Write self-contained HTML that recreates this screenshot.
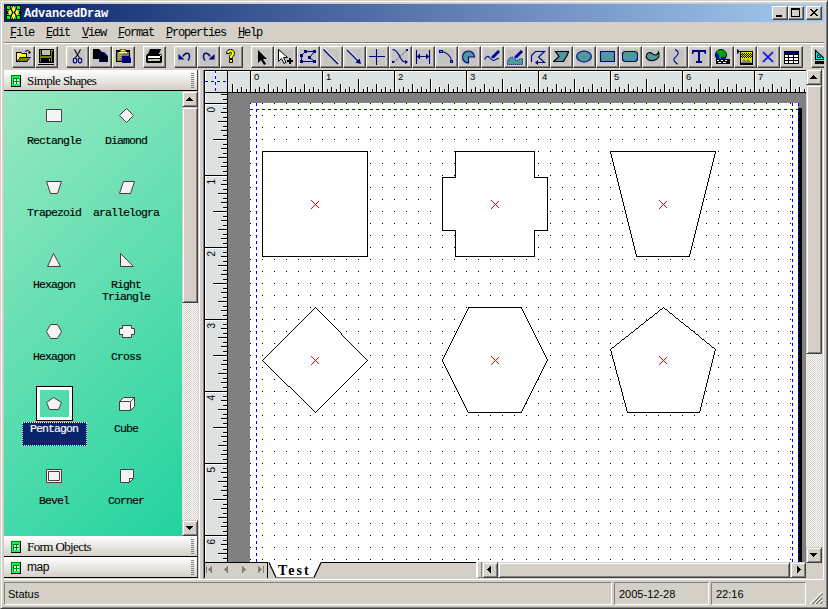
<!DOCTYPE html>
<html><head><meta charset="utf-8">
<style>
*{box-sizing:border-box;margin:0;padding:0}
html,body{width:828px;height:609px;overflow:hidden;background:#D4D0C8}
body{position:relative;font-family:"Liberation Sans",sans-serif}
.a{position:absolute}
.mono{font-family:"Liberation Mono",monospace}
.tb{position:absolute;top:46px;width:23px;height:22px;border-top:1px solid #fff;border-left:1px solid #fff;box-shadow:inset -1px -1px 0 #808080;border-right:1px solid #404040;border-bottom:1px solid #404040;background:#D4D0C8}
.tb svg{position:absolute;left:2px;top:2px;width:16px;height:16px;background:#C8C8C8}
.raised{border-top:1px solid #D4D0C8;border-left:1px solid #D4D0C8;border-right:1px solid #404040;border-bottom:1px solid #404040;box-shadow:inset 1px 1px 0 #fff,inset -1px -1px 0 #808080;background:#D4D0C8}
.menu span{position:absolute;top:27px;font-size:12px;letter-spacing:-1.2px;line-height:12px}
.menu u{text-decoration:none;position:relative}.menu u::after{content:"";position:absolute;left:0;width:6px;top:11px;height:1px;background:#000}
.check{background-color:#fff;background-image:linear-gradient(45deg,#D4D0C8 25%,transparent 25%,transparent 75%,#D4D0C8 75%),linear-gradient(45deg,#D4D0C8 25%,transparent 25%,transparent 75%,#D4D0C8 75%);background-size:2px 2px;background-position:0 0,1px 1px}
.hdr{position:absolute;left:4px;width:194px;height:21px;background:linear-gradient(#fff,#D4D0C8);border-bottom:1px solid #000;border-right:1px solid #404040}
.hdr .ic{position:absolute;left:7px;top:5px;width:10px;height:12px}
.hdr .t{position:absolute;left:23px;top:3px;font-family:"Liberation Serif",serif;font-size:13px;letter-spacing:-0.6px;color:#000;white-space:nowrap;line-height:15px}
.hdr .g{position:absolute;left:187px;top:3px;width:3px;height:15px;background:repeating-linear-gradient(#808080 0 1px,transparent 1px 2px)}
.lbl{position:absolute;font-family:"Liberation Mono",monospace;font-size:11.5px;letter-spacing:-0.9px;-webkit-text-stroke:0.15px currentColor;text-align:center;width:72px;color:#000;line-height:12px}
.st{position:absolute;top:582px;height:23px;border-top:1px solid #808080;border-left:1px solid #808080;border-right:1px solid #fff;border-bottom:1px solid #fff}
.stt{position:absolute;top:589px;font-size:11px;line-height:11px}
</style></head><body>
<!-- window frame -->
<div class="a" style="left:0;top:0;width:828px;height:609px;border-top:1px solid #D4D0C8;border-left:1px solid #D4D0C8;border-right:1px solid #404040;border-bottom:1px solid #404040;box-shadow:inset 1px 1px 0 #fff,inset -1px -1px 0 #808080"></div>
<!-- title bar -->
<div class="a" style="left:4px;top:4px;width:820px;height:18px;background:linear-gradient(to right,#0A246A,#A6CAF0)"></div>
<svg class="a" style="left:6px;top:5px" width="15" height="15" viewBox="0 0 15 15" shape-rendering="crispEdges"><rect width="15" height="15" fill="#000"/><path d="M1 1h3v3h-3zM11 1h3v3h-3zM1 11h3v3h-3zM11 11h3v3h-3zM5 1h1v2h-1zM9 1h1v2h-1zM1 5h2v1h-2zM1 9h2v1h-2zM12 5h2v1h-2zM12 9h2v1h-2zM5 12h1v2h-1zM9 12h1v2h-1z" fill="#00FF00"/><g shape-rendering="auto"><path d="M7.5 0.5L9.5 4L7.5 7.5L5.5 4z" fill="#FFFF00"/><path d="M8.0 1.5L9.5 4L8.0 6.5z" fill="#E0E0F0"/><path d="M4 4.0L6 7.5L4 11.0L2 7.5z" fill="#FFFF00"/><path d="M4.5 5.0L6 7.5L4.5 10.0z" fill="#E0E0F0"/><path d="M11 4.0L13 7.5L11 11.0L9 7.5z" fill="#FFFF00"/><path d="M11.5 5.0L13 7.5L11.5 10.0z" fill="#E0E0F0"/><path d="M7.5 7.5L9.5 11L7.5 14.5L5.5 11z" fill="#FFFF00"/><path d="M8.0 8.5L9.5 11L8.0 13.5z" fill="#E0E0F0"/></g></svg>
<div class="a mono" style="left:24px;top:5px;height:18px;line-height:18px;color:#fff;font-weight:bold;font-size:12px;letter-spacing:-0.2px">AdvancedDraw</div>
<!-- caption buttons -->
<div class="a raised" style="left:772px;top:6px;width:16px;height:14px;border-top-color:#fff;border-left-color:#fff;box-shadow:inset -1px -1px 0 #808080"><div class="a" style="left:3px;top:8px;width:6px;height:2px;background:#000"></div></div>
<div class="a raised" style="left:788px;top:6px;width:16px;height:14px;border-top-color:#fff;border-left-color:#fff;box-shadow:inset -1px -1px 0 #808080"><div class="a" style="left:2px;top:1px;width:9px;height:9px;border:1px solid #000;border-top-width:2px"></div></div>
<div class="a raised" style="left:806px;top:6px;width:16px;height:14px;border-top-color:#fff;border-left-color:#fff;box-shadow:inset -1px -1px 0 #808080"><svg class="a" style="left:3px;top:2px" width="8" height="7" viewBox="0 0 8 7" shape-rendering="crispEdges"><path d="M0 0h2v1h-2zM6 0h2v1h-2zM1 1h2v1h-2zM5 1h2v1h-2zM2 2h4v1h-4zM3 3h2v1h-2zM2 4h4v1h-4zM1 5h2v1h-2zM5 5h2v1h-2zM0 6h2v1h-2zM6 6h2v1h-2z" fill="#000"/></svg></div>
<!-- menu -->
<div class="menu mono">
<span style="left:10px"><u>F</u>ile</span>
<span style="left:46px"><u>E</u>dit</span>
<span style="left:82px"><u>V</u>iew</span>
<span style="left:118px"><u>F</u>ormat</span>
<span style="left:166px"><u>P</u>roperties</span>
<span style="left:238px"><u>H</u>elp</span>
</div>
<div class="a" style="left:4px;top:42px;width:820px;height:1px;background:#808080"></div>
<div class="a" style="left:4px;top:43px;width:820px;height:1px;background:#fff"></div>
<div class="a" style="left:0;top:0;width:824px;height:70px;overflow:hidden">
<div class="tb" style="left:12px"><svg viewBox="0 0 16 16" style="background:#C4C4C4"><path d="M1 3h5l1 1h5v4h4l-4 5h-11z" fill="#000"/><path d="M2 4h4l1 1h4v3h-6l-3 4z" fill="#FFFF00"/><path d="M3 5h1v1h-1zM5 5h1v1h-1zM2 7h1v1h-1zM4 7h1v1h-1zM3 9h1v1h-1zM7 6h1v1h-1zM9 6h1v1h-1z" fill="#fff"/><path d="M5.5 9h9.5l-3.5 3h-9z" fill="#808000"/><path d="M10 2.5q3-2.5 5 0.5" stroke="#000" fill="none"/><path d="M13 3h3l-1.5 2z" fill="#000"/></svg></div>
<div class="tb" style="left:35px"><svg viewBox="0 0 16 16" style="background:#D4D0C8"><path d="M1 0h15v14h-15z" fill="#000"/><path d="M2 1h1v12h-1zM13 1h1v12h-1zM2 7h12v2h-12z" fill="#808000"/><path d="M4 1h8v5h-8z" fill="#C0C0C0"/><path d="M11 10h1v2h-1z" fill="#C0C0C0"/><path d="M14 1h1v1h-1z" fill="#C0C0C0"/><path d="M0 15h16v1h-16z" fill="#000"/></svg></div>
<div class="tb" style="left:66px"><svg viewBox="0 0 16 16" style="background:#C4C4C4"><path d="M5.5 0.5L8.5 6L10.5 8.5M11.5 0.5L8.5 6L6.5 8.5" stroke="#000" fill="none" stroke-width="1.1"/><ellipse cx="6" cy="11.5" rx="1.8" ry="2.4" stroke="#000080" fill="none" stroke-width="1.1"/><ellipse cx="11" cy="11.5" rx="1.8" ry="2.4" stroke="#000080" fill="none" stroke-width="1.1"/></svg></div>
<div class="tb" style="left:89px"><svg viewBox="0 0 16 16" style="background:#C4C4C4"><path d="M1 0h6l3 3v7h-9z" fill="#000"/><path d="M7 3h5l4 4v6h-9z" fill="#000080"/><path d="M8 4h4v3h3v5h-7z" fill="#000"/></svg></div>
<div class="tb" style="left:112px"><svg viewBox="0 0 16 16" style="background:#C4C4C4"><path d="M1 1h14v12h-14z" fill="#000"/><path d="M2 3h12v9h-12z" fill="#808040"/><path d="M3 4h1v1h-1zM5 4h1v1h-1zM7 4h1v1h-1zM4 5h1v1h-1zM6 5h1v1h-1zM3 6h1v1h-1zM5 6h1v1h-1zM4 7h1v1h-1zM3 8h1v1h-1zM5 8h1v1h-1zM4 9h1v1h-1zM3 10h1v1h-1z" fill="#C0C080"/><path d="M5 1l2-1h2l2 1v2h-6z" fill="#FFFF00" stroke="#000" stroke-width="0.8"/><path d="M4 3h8v1h-8z" fill="#fff"/><path d="M7 7h7l2 2v5h-9z" fill="#000080"/><path d="M8 8h5v2h2v3h-7z" fill="#000080"/><path d="M9 10h3v1h-3zM9 12h5v1h-5z" fill="#000"/></svg></div>
<div class="tb" style="left:143px"><svg viewBox="0 0 16 16" style="background:#C4C4C4"><path d="M4 0h11l-2 5h-11z" fill="#000"/><path d="M1 5h14l1 2v6l-1 1h-14l-1-1v-6z" fill="#000"/><path d="M2 7h12v2h-12z" fill="#fff"/><path d="M2 10h12v2h-12z" fill="#C0C0C0"/><path d="M8 10h3v1h-3z" fill="#FFFF00"/><path d="M13 4h1v1h-1zM14 6h1v1h-1z" fill="#fff"/></svg></div>
<div class="tb" style="left:174px"><svg viewBox="0 0 16 16" style="background:#C4C4C4"><path d="M6 7.5C8 3 13 3 12.5 8C12.3 9.5 11.8 10.5 11 11.5" stroke="#000080" stroke-width="1.5" fill="none"/><path d="M1.5 5L7.5 10.5H1.5z" fill="#000080"/></svg></div>
<div class="tb" style="left:197px"><svg viewBox="0 0 16 16" style="background:#C4C4C4"><path d="M10 7.5C8 3 3 3 3.5 8C3.7 9.5 4.2 10.5 5 11.5" stroke="#000080" stroke-width="1.5" fill="none"/><path d="M14.5 5L8.5 10.5H14.5z" fill="#000080"/></svg></div>
<div class="tb" style="left:220px"><svg viewBox="0 0 16 16" style="background:#C4C4C4"><path d="M3.5 4.5C3.5 1.5 5.5 0.5 7.5 0.5S11.5 1.5 11.5 4.5C11.5 6.5 9.5 7.5 9.5 8.5V9.5H6.5V7.5C6.5 6 8.5 5.5 8.5 4.5S8 3 7.5 3S6.5 3.5 6.5 4.5z" fill="#FFFF00" stroke="#000"/><path d="M6.5 10.5h3v3h-3z" fill="#FFFF00" stroke="#000"/></svg></div>
<div class="tb" style="left:251px"><svg viewBox="0 0 16 16" style="background:#C4C4C4"><path d="M4 1v13l3-3 3 5 2-1-3-5h4z" fill="#000"/></svg></div>
<div class="tb" style="left:274px"><svg viewBox="0 0 16 16" style="background:#C4C4C4"><path d="M1.5 0.5V12.5L4.5 9.5L7 14.5L9 13.5L6.5 8.5H10.5z" fill="#fff" stroke="#000"/><path d="M12 9h2v2h2v2h-2v2h-2v-2h-2v-2h2z" fill="#000"/></svg></div>
<div class="tb" style="left:297px"><svg viewBox="0 0 16 16" style="background:#C4C4C4"><path d="M5.5 2.5H14.5L9.5 8.5L14.5 12.5H1.5V6.5Z" stroke="#000080" fill="none" stroke-width="1"/><path d="M4 1h3v3h-3zM13 1h3v3h-3zM0 5h3v3h-3zM8 7h3v3h-3zM0 11h3v3h-3zM13 11h3v3h-3z" fill="#000080"/></svg></div>
<div class="tb" style="left:320px"><svg viewBox="0 0 16 16" style="background:#C4C4C4"><path d="M0.5 0.5L15 15" stroke="#000080" stroke-width="1.2"/><path d="M1.5 -0.5L16 14" stroke="#fff" stroke-width="0.7"/></svg></div>
<div class="tb" style="left:343px"><svg viewBox="0 0 16 16" style="background:#C4C4C4"><path d="M1 1L12.5 12.5" stroke="#000080" stroke-width="1.1"/><path d="M2 0L13.5 11.5" stroke="#fff" stroke-width="0.6"/><path d="M15 15L13.5 9.5L9.5 13.5z" fill="#000080"/></svg></div>
<div class="tb" style="left:366px"><svg viewBox="0 0 16 16" style="background:#C4C4C4"><path d="M0 7.5h16M7.5 0v16" stroke="#000080" stroke-width="1.1"/></svg></div>
<div class="tb" style="left:389px"><svg viewBox="0 0 16 16" style="background:#C4C4C4"><path d="M0.5 0.5C4 0.5 6 4 8 8S11 13 15 13" stroke="#000080" fill="none" stroke-width="1.1"/><path d="M2 13L14 2" stroke="#000080" stroke-dasharray="1 1.6"/><path d="M0 12h2v2h-2zM14 0h2v2h-2z" fill="#000080"/><path d="M13 11l3 2-3 2z" fill="#000080"/></svg></div>
<div class="tb" style="left:412px"><svg viewBox="0 0 16 16" style="background:#C4C4C4"><path d="M1.5 1v14M14.5 1v14M2 7.5h12" stroke="#000080" stroke-width="1.1"/><path d="M2 7.5l3-3v6zM14 7.5l-3-3v6z" fill="#000080"/></svg></div>
<div class="tb" style="left:435px"><svg viewBox="0 0 16 16" style="background:#C4C4C4"><path d="M3 2.5C8 2.5 13 7 13.5 12" stroke="#000080" fill="none" stroke-width="1.1"/><path d="M1 1h4v3h-4zM12 11h3v3h-3z" fill="#000080"/><path d="M2 2h2v1h-2zM13 12h1v1h-1z" fill="#00FF00"/></svg></div>
<div class="tb" style="left:458px"><svg viewBox="0 0 16 16" style="background:#C4C4C4"><path d="M7.5 8H13.5A6 6 0 1 0 7.5 14Z" fill="#4E9A9A" stroke="#000080" stroke-width="1.1"/></svg></div>
<div class="tb" style="left:481px"><svg viewBox="0 0 16 16" style="background:#C4C4C4"><path d="M0.5 10.5C2 8 3.5 6 5.5 8.5S8.5 12 10 11.5S13 9 15 9.5" stroke="#000080" fill="none" stroke-width="1.1"/><path d="M8 7l6-6 2 2-6 6z" fill="#000080"/><path d="M7 8l1.5-1.5 2 2-2 1z" fill="#0000FF"/></svg></div>
<div class="tb" style="left:504px"><svg viewBox="0 0 16 16" style="background:#C4C4C4"><path d="M0.5 15.5V12C2 9 4 7 6 8.5S9 12 11 11S14 9 15.5 10V15.5z" fill="#4E9A9A" stroke="#000080" stroke-width="1" stroke-dasharray="1 1"/><path d="M8 7l6-6 2 2-6 6z" fill="#000080"/><path d="M7 8l1.5-1.5 2 2-2 1z" fill="#0000FF"/></svg></div>
<div class="tb" style="left:527px"><svg viewBox="0 0 16 16" style="background:#C4C4C4"><path d="M1.5 13V6.5L5.5 2.5H14.5L8.5 8L14.5 13.5H6" stroke="#000080" fill="none" stroke-width="1.1"/><path d="M5 13.5l3-2.5v5z" fill="#000080"/></svg></div>
<div class="tb" style="left:550px"><svg viewBox="0 0 16 16" style="background:#C4C4C4"><path d="M2.5 2.5H15.5L14.5 5.5L10.5 12.5H0.5L6 7.5z" fill="#4E9A9A" stroke="#000" stroke-width="1.2"/></svg></div>
<div class="tb" style="left:573px"><svg viewBox="0 0 16 16" style="background:#C4C4C4"><ellipse cx="8" cy="7.5" rx="7.3" ry="5.5" fill="#4E9A9A" stroke="#000080" stroke-width="1.1"/></svg></div>
<div class="tb" style="left:596px"><svg viewBox="0 0 16 16" style="background:#C4C4C4"><path d="M1.5 2.5h14v10h-14z" fill="#4E9A9A" stroke="#000080" stroke-width="1.1"/></svg></div>
<div class="tb" style="left:619px"><svg viewBox="0 0 16 16" style="background:#C4C4C4"><rect x="0.5" y="2.5" width="15" height="10" rx="3" fill="#4E9A9A" stroke="#000080" stroke-width="1.1"/></svg></div>
<div class="tb" style="left:642px"><svg viewBox="0 0 16 16" style="background:#C4C4C4"><path d="M1.5 6.5C2 3.5 5 3 7 4.5S10 7 12 5.5L13.5 3C14.5 6 14 9 11 10.5S5 12 3 10.5S1 8 1.5 6.5z" fill="#4E9A9A" stroke="#000" stroke-width="1.1"/></svg></div>
<div class="tb" style="left:665px"><svg viewBox="0 0 16 16" style="background:#C4C4C4"><path d="M7 0.5C10 2 11.5 3.5 9 6.5S5 9.5 6 11.5S9 14 9.5 15.5" stroke="#000080" fill="none" stroke-width="1.1"/></svg></div>
<div class="tb" style="left:688px"><svg viewBox="0 0 16 16" style="background:#C4C4C4"><path d="M1 1h14v4h-1l-1-2h-4v9h2v2h-6v-2h2v-9h-4l-1 2h-1z" fill="#000080"/></svg></div>
<div class="tb" style="left:711px"><svg viewBox="0 0 16 16" style="background:#C4C4C4"><circle cx="7" cy="6" r="5.5" fill="#0000FF" stroke="#000"/><path d="M4 1.5C7 0 11 1 12 4S11 9 9 8S8 10 6 10S6 6 4 5S2 3 4 1.5z" fill="#00A000"/><path d="M2 10h14v5h-14z" fill="#000"/><path d="M3 11h2v1h-2zM7 11h2v1h-2zM11 11h2v1h-2zM4 13h3v1h-3zM9 13h3v1h-3z" fill="#fff"/></svg></div>
<div class="tb" style="left:734px"><svg viewBox="0 0 16 16" style="background:#C4C4C4"><path d="M0 0l3 2.5-3 2.5z" fill="#000"/><path d="M3 2h13v14h-13z" fill="#000"/><path d="M4 3h11v11h-11z" fill="#E0E000"/><path d="M5 4h1v1h-1zM7 4h1v1h-1zM9 4h1v1h-1zM11 4h1v1h-1zM13 4h1v1h-1zM4 5h1v1h-1zM6 5h1v1h-1zM8 5h1v1h-1zM10 5h1v1h-1zM12 5h1v1h-1zM14 5h1v1h-1zM5 6h1v1h-1zM7 6h1v1h-1zM9 6h1v1h-1zM11 6h1v1h-1zM13 6h1v1h-1zM4 7h1v1h-1zM6 7h1v1h-1zM8 7h1v1h-1zM10 7h1v1h-1zM12 7h1v1h-1zM14 7h1v1h-1zM5 8h1v1h-1zM7 8h1v1h-1zM9 8h1v1h-1zM11 8h1v1h-1zM13 8h1v1h-1z" fill="#000"/><path d="M4 14l3-4 2 2 2-2 4 4z" fill="#808080"/></svg></div>
<div class="tb" style="left:757px"><svg viewBox="0 0 16 16" style="background:#C4C4C4"><path d="M3 3l10 10M13 3l-10 10" stroke="#0000FF" stroke-width="1.6"/></svg></div>
<div class="tb" style="left:780px"><svg viewBox="0 0 16 16" style="background:#C4C4C4"><path d="M1 2h15v13h-15z" fill="#000"/><path d="M2 3h13v2h-13z" fill="#000080"/><path d="M2 6h3v2h-3zM6 6h4v2h-4zM11 6h4v2h-4zM2 9h3v2h-3zM6 9h4v2h-4zM11 9h4v2h-4zM2 12h3v2h-3zM6 12h4v2h-4zM11 12h4v2h-4z" fill="#fff"/></svg></div>
<div class="tb" style="left:811px"><svg viewBox="0 0 16 16" style="background:#C4C4C4"><path d="M1.5 1.5V10.5H11.5z" fill="#00FFFF" stroke="#000" stroke-width="1.1"/><path d="M3.5 5.5V8.5H7z" fill="#C8C8C8" stroke="#000" stroke-width="0.8"/><path d="M10 3h1v8h-1z" fill="#000"/><path d="M1 12h15v3h-15z" fill="#000"/></svg></div>
</div>
<!-- LEFT PANEL -->
<div class="hdr" style="top:70px"><svg class="ic" viewBox="0 0 10 12" shape-rendering="crispEdges"><rect width="10" height="12" fill="#000"/><rect width="9" height="11" fill="#008000"/><rect x="1" y="1" width="8" height="10" fill="#00FF00"/><path d="M2 1h1v1h-1zM4 1h1v1h-1zM6 1h1v1h-1zM8 1h1v1h-1zM1 2h1v1h-1zM1 4h1v1h-1zM1 6h1v1h-1zM1 8h1v1h-1zM1 10h1v1h-1zM8 3h1v1h-1zM8 5h1v1h-1zM8 7h1v1h-1zM8 9h1v1h-1zM3 10h1v1h-1zM5 10h1v1h-1zM7 10h1v1h-1z" fill="#00FFFF"/><rect x="2" y="3" width="6" height="6" fill="#008000"/><path d="M3 4h2v2h-2zM6 4h2v2h-2zM3 7h2v2h-2zM6 7h2v2h-2z" fill="#fff"/></svg><div class="t">Simple Shapes</div><div class="g"></div></div>
<div class="a" style="left:4px;top:91px;width:178px;height:445px;background:linear-gradient(135deg,#98E8C0,#22D3A0)"></div>
<svg class="a" style="left:0;top:0" width="200" height="540" viewBox="0 0 200 540">
<path shape-rendering="crispEdges" d="M36 386h37v35h-37zM40 390v27h29v-27z" fill="#000" fill-rule="evenodd"/>
<path shape-rendering="crispEdges" d="M37 387h35v33h-35zM40 390v27h29v-27z" fill="#fff" fill-rule="evenodd"/>
<path d="M46.5 109.5 L61.5 109.5 L61.5 121.5 L46.5 121.5Z" fill="#F4F4F4" stroke="#4A3C3C"/><path d="M47.5 110.5 L60.5 110.5 L60.5 120.5 L47.5 120.5Z" fill="none" stroke="#fff"/>
<path d="M126.5 108.5 L133.5 115.5 L126.5 122.5 L119.5 115.5Z" fill="#F4F4F4" stroke="#4A3C3C"/>
<path d="M46.5 181.5 L61.5 181.5 L57.5 193.5 L50.5 193.5Z" fill="#F4F4F4" stroke="#4A3C3C"/>
<path d="M123.5 181.5 L134.5 181.5 L130.5 193.5 L119.5 193.5Z" fill="#F4F4F4" stroke="#4A3C3C"/>
<path d="M53.5 253.5 L60.5 266.5 L47.5 266.5Z" fill="#F4F4F4" stroke="#4A3C3C"/>
<path d="M120.5 253.5 L133.5 266.5 L120.5 266.5Z" fill="#F4F4F4" stroke="#4A3C3C"/>
<path d="M50.5 324.5 L57.5 324.5 L61.5 331.5 L57.5 338.5 L50.5 338.5 L46.5 331.5Z" fill="#F4F4F4" stroke="#4A3C3C"/>
<path d="M122.5 325.5 L131.5 325.5 L131.5 328.5 L134.5 328.5 L134.5 334.5 L131.5 334.5 L131.5 337.5 L122.5 337.5 L122.5 334.5 L119.5 334.5 L119.5 328.5 L122.5 328.5Z" fill="#F4F4F4" stroke="#4A3C3C"/>
<path d="M53.5 397.5 L61.5 402.5 L58.5 409.5 L49.5 409.5 L46.5 402.5Z" fill="#F4F4F4" stroke="#4A3C3C"/>
<path d="M123.5 397.5 L134.5 397.5 L134.5 406.5 L130.5 410.5 L119.5 410.5 L119.5 401.5Z" fill="#F4F4F4" stroke="#4A3C3C"/><path d="M119.5 401.5H130.5V410.5M130.5 401.5L134.5 397.5" fill="none" stroke="#4A3C3C"/>
<path d="M46.5 469.5 L61.5 469.5 L61.5 482.5 L46.5 482.5Z" fill="#F4F4F4" stroke="#4A3C3C"/><path d="M48.5 471.5 L59.5 471.5 L59.5 480.5 L48.5 480.5Z" fill="none" stroke="#4A3C3C"/>
<path d="M120.5 469.5 L133.5 469.5 L133.5 478.5 L129.5 482.5 L120.5 482.5Z" fill="#F4F4F4" stroke="#4A3C3C"/><path d="M129.5 482V478.5H133" fill="none" stroke="#4A3C3C"/>
</svg>
<div class="a" style="left:22px;top:422px;width:65px;height:24px;background:#0A246A;outline:1px dotted #fff;outline-offset:-1px;border:1px dotted #000"></div>
<div class="lbl" style="left:18px;top:135px;color:#000">Rectangle</div>
<div class="lbl" style="left:90px;top:135px;color:#000">Diamond</div>
<div class="lbl" style="left:18px;top:207px;color:#000">Trapezoid</div>
<div class="lbl" style="left:90px;top:207px;color:#000">arallelogra</div>
<div class="lbl" style="left:18px;top:279px;color:#000">Hexagon</div>
<div class="lbl" style="left:90px;top:279px;color:#000">Right<br>Triangle</div>
<div class="lbl" style="left:18px;top:351px;color:#000">Hexagon</div>
<div class="lbl" style="left:90px;top:351px;color:#000">Cross</div>
<div class="lbl" style="left:18px;top:423px;color:#fff">Pentagon</div>
<div class="lbl" style="left:90px;top:423px;color:#000">Cube</div>
<div class="lbl" style="left:18px;top:495px;color:#000">Bevel</div>
<div class="lbl" style="left:90px;top:495px;color:#000">Corner</div>
<div class="hdr" style="top:536px"><svg class="ic" viewBox="0 0 10 12" shape-rendering="crispEdges"><rect width="10" height="12" fill="#000"/><rect width="9" height="11" fill="#008000"/><rect x="1" y="1" width="8" height="10" fill="#00FF00"/><path d="M2 1h1v1h-1zM4 1h1v1h-1zM6 1h1v1h-1zM8 1h1v1h-1zM1 2h1v1h-1zM1 4h1v1h-1zM1 6h1v1h-1zM1 8h1v1h-1zM1 10h1v1h-1zM8 3h1v1h-1zM8 5h1v1h-1zM8 7h1v1h-1zM8 9h1v1h-1zM3 10h1v1h-1zM5 10h1v1h-1zM7 10h1v1h-1z" fill="#00FFFF"/><rect x="2" y="3" width="6" height="6" fill="#008000"/><path d="M3 4h2v2h-2zM6 4h2v2h-2zM3 7h2v2h-2zM6 7h2v2h-2z" fill="#fff"/></svg><div class="t">Form Objects</div><div class="g"></div></div>
<div class="hdr" style="top:557px"><svg class="ic" viewBox="0 0 10 12" shape-rendering="crispEdges"><rect width="10" height="12" fill="#000"/><rect width="9" height="11" fill="#008000"/><rect x="1" y="1" width="8" height="10" fill="#00FF00"/><path d="M2 1h1v1h-1zM4 1h1v1h-1zM6 1h1v1h-1zM8 1h1v1h-1zM1 2h1v1h-1zM1 4h1v1h-1zM1 6h1v1h-1zM1 8h1v1h-1zM1 10h1v1h-1zM8 3h1v1h-1zM8 5h1v1h-1zM8 7h1v1h-1zM8 9h1v1h-1zM3 10h1v1h-1zM5 10h1v1h-1zM7 10h1v1h-1z" fill="#00FFFF"/><rect x="2" y="3" width="6" height="6" fill="#008000"/><path d="M3 4h2v2h-2zM6 4h2v2h-2zM3 7h2v2h-2zM6 7h2v2h-2z" fill="#fff"/></svg><div class="t" style="font-family:'Liberation Sans',sans-serif;font-size:12px;letter-spacing:-0.5px;top:3px">map</div><div class="g"></div></div>
<!-- splitter -->
<div class="a" style="left:199px;top:70px;width:1px;height:510px;background:#fff"></div>
<div class="a" style="left:203px;top:70px;width:1px;height:509px;background:#808080"></div>
<div class="a" style="left:204px;top:70px;width:1px;height:508px;background:#000"></div>
<div class="a" style="left:204px;top:70px;width:602px;height:1px;background:#000"></div>
<div class="a" style="left:823px;top:69px;width:1px;height:511px;background:#fff"></div>
<div class="a" style="left:4px;top:579px;width:820px;height:1px;background:#fff"></div>
<svg class="a" style="left:205px;top:71px" width="601" height="491" viewBox="205 71 601 491" shape-rendering="crispEdges">
<rect x="205" y="71" width="601" height="491" fill="#808080"/>
<rect x="205" y="71" width="601" height="22" fill="#DCE2E2"/>
<rect x="205" y="71" width="23" height="491" fill="#DCE2E2"/>
<path d="M205 71h601v1h-601zM205 71h1v491h-1z" fill="#fff"/>
<path d="M233 84h1v8h-1zM238 89h1v3h-1zM242 87h1v5h-1zM247 89h1v3h-1zM251 71h1v21h-1zM256 89h1v3h-1zM260 87h1v5h-1zM265 89h1v3h-1zM269 84h1v8h-1zM274 89h1v3h-1zM278 87h1v5h-1zM283 89h1v3h-1zM287 79h1v13h-1zM292 89h1v3h-1zM296 87h1v5h-1zM301 89h1v3h-1zM305 84h1v8h-1zM310 89h1v3h-1zM314 87h1v5h-1zM319 89h1v3h-1zM323 71h1v21h-1zM328 89h1v3h-1zM332 87h1v5h-1zM337 89h1v3h-1zM341 84h1v8h-1zM346 89h1v3h-1zM350 87h1v5h-1zM355 89h1v3h-1zM359 79h1v13h-1zM364 89h1v3h-1zM368 87h1v5h-1zM373 89h1v3h-1zM377 84h1v8h-1zM382 89h1v3h-1zM386 87h1v5h-1zM391 89h1v3h-1zM395 71h1v21h-1zM400 89h1v3h-1zM404 87h1v5h-1zM409 89h1v3h-1zM413 84h1v8h-1zM418 89h1v3h-1zM422 87h1v5h-1zM427 89h1v3h-1zM431 79h1v13h-1zM436 89h1v3h-1zM440 87h1v5h-1zM445 89h1v3h-1zM449 84h1v8h-1zM454 89h1v3h-1zM458 87h1v5h-1zM463 89h1v3h-1zM467 71h1v21h-1zM472 89h1v3h-1zM476 87h1v5h-1zM481 89h1v3h-1zM485 84h1v8h-1zM490 89h1v3h-1zM494 87h1v5h-1zM499 89h1v3h-1zM503 79h1v13h-1zM508 89h1v3h-1zM512 87h1v5h-1zM517 89h1v3h-1zM521 84h1v8h-1zM526 89h1v3h-1zM530 87h1v5h-1zM535 89h1v3h-1zM539 71h1v21h-1zM544 89h1v3h-1zM548 87h1v5h-1zM553 89h1v3h-1zM557 84h1v8h-1zM562 89h1v3h-1zM566 87h1v5h-1zM571 89h1v3h-1zM575 79h1v13h-1zM580 89h1v3h-1zM584 87h1v5h-1zM589 89h1v3h-1zM593 84h1v8h-1zM598 89h1v3h-1zM602 87h1v5h-1zM607 89h1v3h-1zM611 71h1v21h-1zM616 89h1v3h-1zM620 87h1v5h-1zM625 89h1v3h-1zM629 84h1v8h-1zM634 89h1v3h-1zM638 87h1v5h-1zM643 89h1v3h-1zM647 79h1v13h-1zM652 89h1v3h-1zM656 87h1v5h-1zM661 89h1v3h-1zM665 84h1v8h-1zM670 89h1v3h-1zM674 87h1v5h-1zM679 89h1v3h-1zM683 71h1v21h-1zM688 89h1v3h-1zM692 87h1v5h-1zM697 89h1v3h-1zM701 84h1v8h-1zM706 89h1v3h-1zM710 87h1v5h-1zM715 89h1v3h-1zM719 79h1v13h-1zM724 89h1v3h-1zM728 87h1v5h-1zM733 89h1v3h-1zM737 84h1v8h-1zM742 89h1v3h-1zM746 87h1v5h-1zM751 89h1v3h-1zM755 71h1v21h-1zM760 89h1v3h-1zM764 87h1v5h-1zM769 89h1v3h-1zM773 84h1v8h-1zM778 89h1v3h-1zM782 87h1v5h-1zM787 89h1v3h-1zM791 79h1v13h-1zM796 89h1v3h-1zM800 87h1v5h-1zM805 89h1v3h-1zM221 95h6v1h-6zM223 100h4v1h-4zM205 104h22v1h-22zM223 109h4v1h-4zM221 113h6v1h-6zM223 118h4v1h-4zM218 122h9v1h-9zM223 127h4v1h-4zM221 131h6v1h-6zM223 136h4v1h-4zM213 140h14v1h-14zM223 145h4v1h-4zM221 149h6v1h-6zM223 154h4v1h-4zM218 158h9v1h-9zM223 163h4v1h-4zM221 167h6v1h-6zM223 172h4v1h-4zM205 176h22v1h-22zM223 181h4v1h-4zM221 185h6v1h-6zM223 190h4v1h-4zM218 194h9v1h-9zM223 199h4v1h-4zM221 203h6v1h-6zM223 208h4v1h-4zM213 212h14v1h-14zM223 217h4v1h-4zM221 221h6v1h-6zM223 226h4v1h-4zM218 230h9v1h-9zM223 235h4v1h-4zM221 239h6v1h-6zM223 244h4v1h-4zM205 248h22v1h-22zM223 253h4v1h-4zM221 257h6v1h-6zM223 262h4v1h-4zM218 266h9v1h-9zM223 271h4v1h-4zM221 275h6v1h-6zM223 280h4v1h-4zM213 284h14v1h-14zM223 289h4v1h-4zM221 293h6v1h-6zM223 298h4v1h-4zM218 302h9v1h-9zM223 307h4v1h-4zM221 311h6v1h-6zM223 316h4v1h-4zM205 320h22v1h-22zM223 325h4v1h-4zM221 329h6v1h-6zM223 334h4v1h-4zM218 338h9v1h-9zM223 343h4v1h-4zM221 347h6v1h-6zM223 352h4v1h-4zM213 356h14v1h-14zM223 361h4v1h-4zM221 365h6v1h-6zM223 370h4v1h-4zM218 374h9v1h-9zM223 379h4v1h-4zM221 383h6v1h-6zM223 388h4v1h-4zM205 392h22v1h-22zM223 397h4v1h-4zM221 401h6v1h-6zM223 406h4v1h-4zM218 410h9v1h-9zM223 415h4v1h-4zM221 419h6v1h-6zM223 424h4v1h-4zM213 428h14v1h-14zM223 433h4v1h-4zM221 437h6v1h-6zM223 442h4v1h-4zM218 446h9v1h-9zM223 451h4v1h-4zM221 455h6v1h-6zM223 460h4v1h-4zM205 464h22v1h-22zM223 469h4v1h-4zM221 473h6v1h-6zM223 478h4v1h-4zM218 482h9v1h-9zM223 487h4v1h-4zM221 491h6v1h-6zM223 496h4v1h-4zM213 500h14v1h-14zM223 505h4v1h-4zM221 509h6v1h-6zM223 514h4v1h-4zM218 518h9v1h-9zM223 523h4v1h-4zM221 527h6v1h-6zM223 532h4v1h-4zM205 536h22v1h-22zM223 541h4v1h-4zM221 545h6v1h-6zM223 550h4v1h-4zM218 554h9v1h-9zM223 559h4v1h-4z" fill="#fff"/>
<path d="M205 92h601v1h-601zM227 71h1v491h-1zM232 84h1v8h-1zM237 89h1v3h-1zM241 87h1v5h-1zM246 89h1v3h-1zM250 71h1v21h-1zM255 89h1v3h-1zM259 87h1v5h-1zM264 89h1v3h-1zM268 84h1v8h-1zM273 89h1v3h-1zM277 87h1v5h-1zM282 89h1v3h-1zM286 79h1v13h-1zM291 89h1v3h-1zM295 87h1v5h-1zM300 89h1v3h-1zM304 84h1v8h-1zM309 89h1v3h-1zM313 87h1v5h-1zM318 89h1v3h-1zM322 71h1v21h-1zM327 89h1v3h-1zM331 87h1v5h-1zM336 89h1v3h-1zM340 84h1v8h-1zM345 89h1v3h-1zM349 87h1v5h-1zM354 89h1v3h-1zM358 79h1v13h-1zM363 89h1v3h-1zM367 87h1v5h-1zM372 89h1v3h-1zM376 84h1v8h-1zM381 89h1v3h-1zM385 87h1v5h-1zM390 89h1v3h-1zM394 71h1v21h-1zM399 89h1v3h-1zM403 87h1v5h-1zM408 89h1v3h-1zM412 84h1v8h-1zM417 89h1v3h-1zM421 87h1v5h-1zM426 89h1v3h-1zM430 79h1v13h-1zM435 89h1v3h-1zM439 87h1v5h-1zM444 89h1v3h-1zM448 84h1v8h-1zM453 89h1v3h-1zM457 87h1v5h-1zM462 89h1v3h-1zM466 71h1v21h-1zM471 89h1v3h-1zM475 87h1v5h-1zM480 89h1v3h-1zM484 84h1v8h-1zM489 89h1v3h-1zM493 87h1v5h-1zM498 89h1v3h-1zM502 79h1v13h-1zM507 89h1v3h-1zM511 87h1v5h-1zM516 89h1v3h-1zM520 84h1v8h-1zM525 89h1v3h-1zM529 87h1v5h-1zM534 89h1v3h-1zM538 71h1v21h-1zM543 89h1v3h-1zM547 87h1v5h-1zM552 89h1v3h-1zM556 84h1v8h-1zM561 89h1v3h-1zM565 87h1v5h-1zM570 89h1v3h-1zM574 79h1v13h-1zM579 89h1v3h-1zM583 87h1v5h-1zM588 89h1v3h-1zM592 84h1v8h-1zM597 89h1v3h-1zM601 87h1v5h-1zM606 89h1v3h-1zM610 71h1v21h-1zM615 89h1v3h-1zM619 87h1v5h-1zM624 89h1v3h-1zM628 84h1v8h-1zM633 89h1v3h-1zM637 87h1v5h-1zM642 89h1v3h-1zM646 79h1v13h-1zM651 89h1v3h-1zM655 87h1v5h-1zM660 89h1v3h-1zM664 84h1v8h-1zM669 89h1v3h-1zM673 87h1v5h-1zM678 89h1v3h-1zM682 71h1v21h-1zM687 89h1v3h-1zM691 87h1v5h-1zM696 89h1v3h-1zM700 84h1v8h-1zM705 89h1v3h-1zM709 87h1v5h-1zM714 89h1v3h-1zM718 79h1v13h-1zM723 89h1v3h-1zM727 87h1v5h-1zM732 89h1v3h-1zM736 84h1v8h-1zM741 89h1v3h-1zM745 87h1v5h-1zM750 89h1v3h-1zM754 71h1v21h-1zM759 89h1v3h-1zM763 87h1v5h-1zM768 89h1v3h-1zM772 84h1v8h-1zM777 89h1v3h-1zM781 87h1v5h-1zM786 89h1v3h-1zM790 79h1v13h-1zM795 89h1v3h-1zM799 87h1v5h-1zM804 89h1v3h-1zM221 94h6v1h-6zM223 99h4v1h-4zM205 103h22v1h-22zM223 108h4v1h-4zM221 112h6v1h-6zM223 117h4v1h-4zM218 121h9v1h-9zM223 126h4v1h-4zM221 130h6v1h-6zM223 135h4v1h-4zM213 139h14v1h-14zM223 144h4v1h-4zM221 148h6v1h-6zM223 153h4v1h-4zM218 157h9v1h-9zM223 162h4v1h-4zM221 166h6v1h-6zM223 171h4v1h-4zM205 175h22v1h-22zM223 180h4v1h-4zM221 184h6v1h-6zM223 189h4v1h-4zM218 193h9v1h-9zM223 198h4v1h-4zM221 202h6v1h-6zM223 207h4v1h-4zM213 211h14v1h-14zM223 216h4v1h-4zM221 220h6v1h-6zM223 225h4v1h-4zM218 229h9v1h-9zM223 234h4v1h-4zM221 238h6v1h-6zM223 243h4v1h-4zM205 247h22v1h-22zM223 252h4v1h-4zM221 256h6v1h-6zM223 261h4v1h-4zM218 265h9v1h-9zM223 270h4v1h-4zM221 274h6v1h-6zM223 279h4v1h-4zM213 283h14v1h-14zM223 288h4v1h-4zM221 292h6v1h-6zM223 297h4v1h-4zM218 301h9v1h-9zM223 306h4v1h-4zM221 310h6v1h-6zM223 315h4v1h-4zM205 319h22v1h-22zM223 324h4v1h-4zM221 328h6v1h-6zM223 333h4v1h-4zM218 337h9v1h-9zM223 342h4v1h-4zM221 346h6v1h-6zM223 351h4v1h-4zM213 355h14v1h-14zM223 360h4v1h-4zM221 364h6v1h-6zM223 369h4v1h-4zM218 373h9v1h-9zM223 378h4v1h-4zM221 382h6v1h-6zM223 387h4v1h-4zM205 391h22v1h-22zM223 396h4v1h-4zM221 400h6v1h-6zM223 405h4v1h-4zM218 409h9v1h-9zM223 414h4v1h-4zM221 418h6v1h-6zM223 423h4v1h-4zM213 427h14v1h-14zM223 432h4v1h-4zM221 436h6v1h-6zM223 441h4v1h-4zM218 445h9v1h-9zM223 450h4v1h-4zM221 454h6v1h-6zM223 459h4v1h-4zM205 463h22v1h-22zM223 468h4v1h-4zM221 472h6v1h-6zM223 477h4v1h-4zM218 481h9v1h-9zM223 486h4v1h-4zM221 490h6v1h-6zM223 495h4v1h-4zM213 499h14v1h-14zM223 504h4v1h-4zM221 508h6v1h-6zM223 513h4v1h-4zM218 517h9v1h-9zM223 522h4v1h-4zM221 526h6v1h-6zM223 531h4v1h-4zM205 535h22v1h-22zM223 540h4v1h-4zM221 544h6v1h-6zM223 549h4v1h-4zM218 553h9v1h-9zM223 558h4v1h-4z" fill="#000"/>
<rect x="205" y="71" width="22" height="21" fill="#DCE2E2"/>
<path d="M205 71h22v1h-22zM205 71h1v21h-1z" fill="#fff"/>
<path d="M215 71h1v21h-1zM205 81h22v1h-22z" fill="#fff"/>
<path d="M215 70h1v3h-1zM215 76h1v3h-1zM215 82h1v3h-1zM215 88h1v3h-1zM205 81h3v1h-3zM211 81h3v1h-3zM217 81h3v1h-3zM223 81h3v1h-3z" fill="#0000FF"/>
<g shape-rendering="auto"><text x="254" y="80" font-size="9.5" font-family="Liberation Sans">0</text><text x="326" y="80" font-size="9.5" font-family="Liberation Sans">1</text><text x="398" y="80" font-size="9.5" font-family="Liberation Sans">2</text><text x="470" y="80" font-size="9.5" font-family="Liberation Sans">3</text><text x="542" y="80" font-size="9.5" font-family="Liberation Sans">4</text><text x="614" y="80" font-size="9.5" font-family="Liberation Sans">5</text><text x="686" y="80" font-size="9.5" font-family="Liberation Sans">6</text><text x="758" y="80" font-size="9.5" font-family="Liberation Sans">7</text><text transform="translate(215 107) rotate(-90)" text-anchor="end" font-size="10" font-family="Liberation Sans">0</text><text transform="translate(215 179) rotate(-90)" text-anchor="end" font-size="10" font-family="Liberation Sans">1</text><text transform="translate(215 251) rotate(-90)" text-anchor="end" font-size="10" font-family="Liberation Sans">2</text><text transform="translate(215 323) rotate(-90)" text-anchor="end" font-size="10" font-family="Liberation Sans">3</text><text transform="translate(215 395) rotate(-90)" text-anchor="end" font-size="10" font-family="Liberation Sans">4</text><text transform="translate(215 467) rotate(-90)" text-anchor="end" font-size="10" font-family="Liberation Sans">5</text><text transform="translate(215 539) rotate(-90)" text-anchor="end" font-size="10" font-family="Liberation Sans">6</text></g>
<svg x="228" y="93" width="578" height="469" viewBox="228 93 578 469" overflow="hidden">
<defs><pattern id="dots" x="250" y="103" width="12" height="12" patternUnits="userSpaceOnUse"><rect width="1" height="1" fill="#000"/></pattern></defs>
<rect x="250" y="103" width="548" height="480" fill="#fff"/>
<rect x="798" y="108" width="4" height="480" fill="#000"/>
<rect x="250" y="103" width="548" height="480" fill="url(#dots)"/>
<g stroke="#0000FF" stroke-dasharray="3 3">
<line x1="250" y1="109.5" x2="798" y2="109.5"/>
<line x1="256.5" y1="103" x2="256.5" y2="600"/>
<line x1="792.5" y1="103" x2="792.5" y2="600"/>
<line x1="798.5" y1="103" x2="798.5" y2="600"/>
</g>
<g transform="translate(0.5 0.5)" fill="#fff" stroke="none" shape-rendering="crispEdges">
<polygon points="262,151 367,151 367,256 262,256"/>
<polygon points="455,151 534,151 534,177 547,177 547,230 534,230 534,256 455,256 455,230 442,230 442,177 455,177"/>
<polygon points="610,151 715,151 689,256 636,256"/>
<polygon points="315,307 367,360 315,412 262,360"/>
<polygon points="468,307 521,307 547,360 521,412 468,412 442,360"/>
<polygon points="663,307 715,349 699,412 627,412 610,349"/>
</g>
<rect x="262" y="151" width="106" height="1" fill="#000"/>
<rect x="367" y="151" width="1" height="106" fill="#000"/>
<rect x="262" y="256" width="106" height="1" fill="#000"/>
<rect x="262" y="151" width="1" height="106" fill="#000"/>
<rect x="455" y="151" width="80" height="1" fill="#000"/>
<rect x="534" y="151" width="1" height="27" fill="#000"/>
<rect x="534" y="177" width="14" height="1" fill="#000"/>
<rect x="547" y="177" width="1" height="54" fill="#000"/>
<rect x="534" y="230" width="14" height="1" fill="#000"/>
<rect x="534" y="230" width="1" height="27" fill="#000"/>
<rect x="455" y="256" width="80" height="1" fill="#000"/>
<rect x="455" y="230" width="1" height="27" fill="#000"/>
<rect x="442" y="230" width="14" height="1" fill="#000"/>
<rect x="442" y="177" width="1" height="54" fill="#000"/>
<rect x="442" y="177" width="14" height="1" fill="#000"/>
<rect x="455" y="151" width="1" height="27" fill="#000"/>
<rect x="610" y="151" width="106" height="1" fill="#000"/>
<rect x="636" y="256" width="54" height="1" fill="#000"/>
<rect x="468" y="307" width="54" height="1" fill="#000"/>
<rect x="468" y="412" width="54" height="1" fill="#000"/>
<rect x="627" y="412" width="73" height="1" fill="#000"/>
<path d="M262 360h1v1h-1zM263 359h1v1h-1zM263 361h1v1h-1zM264 358h1v1h-1zM264 362h1v1h-1zM265 357h1v1h-1zM265 363h1v1h-1zM266 356h1v1h-1zM266 364h1v1h-1zM267 355h1v1h-1zM267 365h1v1h-1zM268 354h1v1h-1zM268 366h1v1h-1zM269 353h1v1h-1zM269 367h1v1h-1zM270 352h1v1h-1zM270 368h1v1h-1zM271 351h1v1h-1zM271 369h1v1h-1zM272 350h1v1h-1zM272 370h1v1h-1zM273 349h1v1h-1zM273 371h1v1h-1zM274 348h1v1h-1zM274 372h1v1h-1zM275 347h1v1h-1zM275 373h1v1h-1zM276 346h1v1h-1zM276 374h1v1h-1zM277 345h1v1h-1zM277 375h1v1h-1zM278 344h1v1h-1zM278 376h1v1h-1zM279 343h1v1h-1zM279 377h1v1h-1zM280 342h1v1h-1zM280 378h1v1h-1zM281 341h1v1h-1zM281 379h1v1h-1zM282 340h1v1h-1zM282 380h1v1h-1zM283 339h1v1h-1zM283 381h1v1h-1zM284 338h1v1h-1zM284 382h1v1h-1zM285 337h1v1h-1zM285 383h1v1h-1zM286 336h1v1h-1zM286 384h1v1h-1zM287 335h1v1h-1zM287 385h1v1h-1zM288 334h1v1h-1zM288 386h1v1h-1zM289 333h1v1h-1zM289 386h1v1h-1zM290 332h1v1h-1zM290 387h1v1h-1zM291 331h1v1h-1zM291 388h1v1h-1zM292 330h1v1h-1zM292 389h1v1h-1zM293 329h1v1h-1zM293 390h1v1h-1zM294 328h1v1h-1zM294 391h1v1h-1zM295 327h1v1h-1zM295 392h1v1h-1zM296 326h1v1h-1zM296 393h1v1h-1zM297 325h1v1h-1zM297 394h1v1h-1zM298 324h1v1h-1zM298 395h1v1h-1zM299 323h1v1h-1zM299 396h1v1h-1zM300 322h1v1h-1zM300 397h1v1h-1zM301 321h1v1h-1zM301 398h1v1h-1zM302 320h1v1h-1zM302 399h1v1h-1zM303 319h1v1h-1zM303 400h1v1h-1zM304 318h1v1h-1zM304 401h1v1h-1zM305 317h1v1h-1zM305 402h1v1h-1zM306 316h1v1h-1zM306 403h1v1h-1zM307 315h1v1h-1zM307 404h1v1h-1zM308 314h1v1h-1zM308 405h1v1h-1zM309 313h1v1h-1zM309 406h1v1h-1zM310 312h1v1h-1zM310 407h1v1h-1zM311 311h1v1h-1zM311 408h1v1h-1zM312 310h1v1h-1zM312 409h1v1h-1zM313 309h1v1h-1zM313 410h1v1h-1zM314 308h1v1h-1zM314 411h1v1h-1zM315 307h1v1h-1zM315 412h1v1h-1zM316 308h1v1h-1zM316 411h1v1h-1zM317 309h1v1h-1zM317 410h1v1h-1zM318 310h1v1h-1zM318 409h1v1h-1zM319 311h1v1h-1zM319 408h1v1h-1zM320 312h1v1h-1zM320 407h1v1h-1zM321 313h1v1h-1zM321 406h1v1h-1zM322 314h1v1h-1zM322 405h1v1h-1zM323 315h1v1h-1zM323 404h1v1h-1zM324 316h1v1h-1zM324 403h1v1h-1zM325 317h1v1h-1zM325 402h1v1h-1zM326 318h1v1h-1zM326 401h1v1h-1zM327 319h1v1h-1zM327 400h1v1h-1zM328 320h1v1h-1zM328 399h1v1h-1zM329 321h1v1h-1zM329 398h1v1h-1zM330 322h1v1h-1zM330 397h1v1h-1zM331 323h1v1h-1zM331 396h1v1h-1zM332 324h1v1h-1zM332 395h1v1h-1zM333 325h1v1h-1zM333 394h1v1h-1zM334 326h1v1h-1zM334 393h1v1h-1zM335 327h1v1h-1zM335 392h1v1h-1zM336 328h1v1h-1zM336 391h1v1h-1zM337 329h1v1h-1zM337 390h1v1h-1zM338 330h1v1h-1zM338 389h1v1h-1zM339 331h1v1h-1zM339 388h1v1h-1zM340 332h1v1h-1zM340 387h1v1h-1zM341 333h1v1h-1zM341 334h1v1h-1zM341 386h1v1h-1zM342 335h1v1h-1zM342 385h1v1h-1zM343 336h1v1h-1zM343 384h1v1h-1zM344 337h1v1h-1zM344 383h1v1h-1zM345 338h1v1h-1zM345 382h1v1h-1zM346 339h1v1h-1zM346 381h1v1h-1zM347 340h1v1h-1zM347 380h1v1h-1zM348 341h1v1h-1zM348 379h1v1h-1zM349 342h1v1h-1zM349 378h1v1h-1zM350 343h1v1h-1zM350 377h1v1h-1zM351 344h1v1h-1zM351 376h1v1h-1zM352 345h1v1h-1zM352 375h1v1h-1zM353 346h1v1h-1zM353 374h1v1h-1zM354 347h1v1h-1zM354 373h1v1h-1zM355 348h1v1h-1zM355 372h1v1h-1zM356 349h1v1h-1zM356 371h1v1h-1zM357 350h1v1h-1zM357 370h1v1h-1zM358 351h1v1h-1zM358 369h1v1h-1zM359 352h1v1h-1zM359 368h1v1h-1zM360 353h1v1h-1zM360 367h1v1h-1zM361 354h1v1h-1zM361 366h1v1h-1zM362 355h1v1h-1zM362 365h1v1h-1zM363 356h1v1h-1zM363 364h1v1h-1zM364 357h1v1h-1zM364 363h1v1h-1zM365 358h1v1h-1zM365 362h1v1h-1zM366 359h1v1h-1zM366 361h1v1h-1zM367 360h1v1h-1zM442 359h1v1h-1zM442 360h1v1h-1zM442 361h1v1h-1zM443 357h1v1h-1zM443 358h1v1h-1zM443 362h1v1h-1zM443 363h1v1h-1zM444 355h1v1h-1zM444 356h1v1h-1zM444 364h1v1h-1zM444 365h1v1h-1zM445 353h1v1h-1zM445 354h1v1h-1zM445 366h1v1h-1zM445 367h1v1h-1zM446 351h1v1h-1zM446 352h1v1h-1zM446 368h1v1h-1zM446 369h1v1h-1zM447 349h1v1h-1zM447 350h1v1h-1zM447 370h1v1h-1zM447 371h1v1h-1zM448 347h1v1h-1zM448 348h1v1h-1zM448 372h1v1h-1zM448 373h1v1h-1zM449 345h1v1h-1zM449 346h1v1h-1zM449 374h1v1h-1zM449 375h1v1h-1zM450 343h1v1h-1zM450 344h1v1h-1zM450 376h1v1h-1zM450 377h1v1h-1zM451 341h1v1h-1zM451 342h1v1h-1zM451 378h1v1h-1zM451 379h1v1h-1zM452 339h1v1h-1zM452 340h1v1h-1zM452 380h1v1h-1zM452 381h1v1h-1zM453 337h1v1h-1zM453 338h1v1h-1zM453 382h1v1h-1zM453 383h1v1h-1zM454 335h1v1h-1zM454 336h1v1h-1zM454 384h1v1h-1zM454 385h1v1h-1zM455 333h1v1h-1zM455 334h1v1h-1zM455 386h1v1h-1zM455 387h1v1h-1zM456 331h1v1h-1zM456 332h1v1h-1zM456 388h1v1h-1zM456 389h1v1h-1zM457 329h1v1h-1zM457 330h1v1h-1zM457 390h1v1h-1zM457 391h1v1h-1zM458 327h1v1h-1zM458 328h1v1h-1zM458 392h1v1h-1zM458 393h1v1h-1zM459 325h1v1h-1zM459 326h1v1h-1zM459 394h1v1h-1zM459 395h1v1h-1zM460 323h1v1h-1zM460 324h1v1h-1zM460 396h1v1h-1zM460 397h1v1h-1zM461 321h1v1h-1zM461 322h1v1h-1zM461 398h1v1h-1zM461 399h1v1h-1zM462 319h1v1h-1zM462 320h1v1h-1zM462 400h1v1h-1zM462 401h1v1h-1zM463 317h1v1h-1zM463 318h1v1h-1zM463 402h1v1h-1zM463 403h1v1h-1zM464 315h1v1h-1zM464 316h1v1h-1zM464 404h1v1h-1zM464 405h1v1h-1zM465 313h1v1h-1zM465 314h1v1h-1zM465 406h1v1h-1zM465 407h1v1h-1zM466 311h1v1h-1zM466 312h1v1h-1zM466 408h1v1h-1zM466 409h1v1h-1zM467 309h1v1h-1zM467 310h1v1h-1zM467 410h1v1h-1zM467 411h1v1h-1zM468 307h1v1h-1zM468 308h1v1h-1zM468 412h1v1h-1zM521 307h1v1h-1zM521 308h1v1h-1zM521 411h1v1h-1zM521 412h1v1h-1zM522 309h1v1h-1zM522 310h1v1h-1zM522 409h1v1h-1zM522 410h1v1h-1zM523 311h1v1h-1zM523 312h1v1h-1zM523 407h1v1h-1zM523 408h1v1h-1zM524 313h1v1h-1zM524 314h1v1h-1zM524 405h1v1h-1zM524 406h1v1h-1zM525 315h1v1h-1zM525 316h1v1h-1zM525 403h1v1h-1zM525 404h1v1h-1zM526 317h1v1h-1zM526 318h1v1h-1zM526 401h1v1h-1zM526 402h1v1h-1zM527 319h1v1h-1zM527 320h1v1h-1zM527 399h1v1h-1zM527 400h1v1h-1zM528 321h1v1h-1zM528 322h1v1h-1zM528 397h1v1h-1zM528 398h1v1h-1zM529 323h1v1h-1zM529 324h1v1h-1zM529 395h1v1h-1zM529 396h1v1h-1zM530 325h1v1h-1zM530 326h1v1h-1zM530 393h1v1h-1zM530 394h1v1h-1zM531 327h1v1h-1zM531 328h1v1h-1zM531 391h1v1h-1zM531 392h1v1h-1zM532 329h1v1h-1zM532 330h1v1h-1zM532 389h1v1h-1zM532 390h1v1h-1zM533 331h1v1h-1zM533 332h1v1h-1zM533 387h1v1h-1zM533 388h1v1h-1zM534 333h1v1h-1zM534 334h1v1h-1zM534 385h1v1h-1zM534 386h1v1h-1zM535 335h1v1h-1zM535 336h1v1h-1zM535 383h1v1h-1zM535 384h1v1h-1zM536 337h1v1h-1zM536 338h1v1h-1zM536 381h1v1h-1zM536 382h1v1h-1zM537 339h1v1h-1zM537 340h1v1h-1zM537 379h1v1h-1zM537 380h1v1h-1zM538 341h1v1h-1zM538 342h1v1h-1zM538 377h1v1h-1zM538 378h1v1h-1zM539 343h1v1h-1zM539 344h1v1h-1zM539 375h1v1h-1zM539 376h1v1h-1zM540 345h1v1h-1zM540 346h1v1h-1zM540 373h1v1h-1zM540 374h1v1h-1zM541 347h1v1h-1zM541 348h1v1h-1zM541 371h1v1h-1zM541 372h1v1h-1zM542 349h1v1h-1zM542 350h1v1h-1zM542 369h1v1h-1zM542 370h1v1h-1zM543 351h1v1h-1zM543 352h1v1h-1zM543 367h1v1h-1zM543 368h1v1h-1zM544 353h1v1h-1zM544 354h1v1h-1zM544 365h1v1h-1zM544 366h1v1h-1zM545 355h1v1h-1zM545 356h1v1h-1zM545 363h1v1h-1zM545 364h1v1h-1zM546 357h1v1h-1zM546 358h1v1h-1zM546 361h1v1h-1zM546 362h1v1h-1zM547 359h1v1h-1zM547 360h1v1h-1zM610 151h1v1h-1zM610 152h1v1h-1zM610 153h1v1h-1zM610 349h1v1h-1zM610 350h1v1h-1zM611 154h1v1h-1zM611 155h1v1h-1zM611 156h1v1h-1zM611 157h1v1h-1zM611 348h1v1h-1zM611 351h1v1h-1zM611 352h1v1h-1zM611 353h1v1h-1zM611 354h1v1h-1zM612 158h1v1h-1zM612 159h1v1h-1zM612 160h1v1h-1zM612 161h1v1h-1zM612 347h1v1h-1zM612 355h1v1h-1zM612 356h1v1h-1zM612 357h1v1h-1zM612 358h1v1h-1zM613 162h1v1h-1zM613 163h1v1h-1zM613 164h1v1h-1zM613 165h1v1h-1zM613 347h1v1h-1zM613 359h1v1h-1zM613 360h1v1h-1zM613 361h1v1h-1zM614 166h1v1h-1zM614 167h1v1h-1zM614 168h1v1h-1zM614 169h1v1h-1zM614 346h1v1h-1zM614 362h1v1h-1zM614 363h1v1h-1zM614 364h1v1h-1zM614 365h1v1h-1zM615 170h1v1h-1zM615 171h1v1h-1zM615 172h1v1h-1zM615 173h1v1h-1zM615 345h1v1h-1zM615 366h1v1h-1zM615 367h1v1h-1zM615 368h1v1h-1zM615 369h1v1h-1zM616 174h1v1h-1zM616 175h1v1h-1zM616 176h1v1h-1zM616 177h1v1h-1zM616 344h1v1h-1zM616 370h1v1h-1zM616 371h1v1h-1zM616 372h1v1h-1zM616 373h1v1h-1zM617 178h1v1h-1zM617 179h1v1h-1zM617 180h1v1h-1zM617 181h1v1h-1zM617 343h1v1h-1zM617 374h1v1h-1zM617 375h1v1h-1zM617 376h1v1h-1zM618 182h1v1h-1zM618 183h1v1h-1zM618 184h1v1h-1zM618 185h1v1h-1zM618 343h1v1h-1zM618 377h1v1h-1zM618 378h1v1h-1zM618 379h1v1h-1zM618 380h1v1h-1zM619 186h1v1h-1zM619 187h1v1h-1zM619 188h1v1h-1zM619 189h1v1h-1zM619 342h1v1h-1zM619 381h1v1h-1zM619 382h1v1h-1zM619 383h1v1h-1zM619 384h1v1h-1zM620 190h1v1h-1zM620 191h1v1h-1zM620 192h1v1h-1zM620 193h1v1h-1zM620 341h1v1h-1zM620 385h1v1h-1zM620 386h1v1h-1zM620 387h1v1h-1zM621 194h1v1h-1zM621 195h1v1h-1zM621 196h1v1h-1zM621 197h1v1h-1zM621 340h1v1h-1zM621 388h1v1h-1zM621 389h1v1h-1zM621 390h1v1h-1zM621 391h1v1h-1zM622 198h1v1h-1zM622 199h1v1h-1zM622 200h1v1h-1zM622 201h1v1h-1zM622 339h1v1h-1zM622 392h1v1h-1zM622 393h1v1h-1zM622 394h1v1h-1zM622 395h1v1h-1zM623 202h1v1h-1zM623 203h1v1h-1zM623 204h1v1h-1zM623 205h1v1h-1zM623 339h1v1h-1zM623 396h1v1h-1zM623 397h1v1h-1zM623 398h1v1h-1zM623 399h1v1h-1zM624 206h1v1h-1zM624 207h1v1h-1zM624 208h1v1h-1zM624 209h1v1h-1zM624 338h1v1h-1zM624 400h1v1h-1zM624 401h1v1h-1zM624 402h1v1h-1zM625 210h1v1h-1zM625 211h1v1h-1zM625 212h1v1h-1zM625 213h1v1h-1zM625 337h1v1h-1zM625 403h1v1h-1zM625 404h1v1h-1zM625 405h1v1h-1zM625 406h1v1h-1zM626 214h1v1h-1zM626 215h1v1h-1zM626 216h1v1h-1zM626 217h1v1h-1zM626 336h1v1h-1zM626 407h1v1h-1zM626 408h1v1h-1zM626 409h1v1h-1zM626 410h1v1h-1zM627 218h1v1h-1zM627 219h1v1h-1zM627 220h1v1h-1zM627 221h1v1h-1zM627 336h1v1h-1zM627 411h1v1h-1zM627 412h1v1h-1zM628 222h1v1h-1zM628 223h1v1h-1zM628 224h1v1h-1zM628 225h1v1h-1zM628 335h1v1h-1zM629 226h1v1h-1zM629 227h1v1h-1zM629 228h1v1h-1zM629 229h1v1h-1zM629 334h1v1h-1zM630 230h1v1h-1zM630 231h1v1h-1zM630 232h1v1h-1zM630 233h1v1h-1zM630 333h1v1h-1zM631 234h1v1h-1zM631 235h1v1h-1zM631 236h1v1h-1zM631 237h1v1h-1zM631 332h1v1h-1zM632 238h1v1h-1zM632 239h1v1h-1zM632 240h1v1h-1zM632 241h1v1h-1zM632 332h1v1h-1zM633 242h1v1h-1zM633 243h1v1h-1zM633 244h1v1h-1zM633 245h1v1h-1zM633 331h1v1h-1zM634 246h1v1h-1zM634 247h1v1h-1zM634 248h1v1h-1zM634 249h1v1h-1zM634 330h1v1h-1zM635 250h1v1h-1zM635 251h1v1h-1zM635 252h1v1h-1zM635 253h1v1h-1zM635 329h1v1h-1zM636 254h1v1h-1zM636 255h1v1h-1zM636 256h1v1h-1zM636 328h1v1h-1zM637 328h1v1h-1zM638 327h1v1h-1zM639 326h1v1h-1zM640 325h1v1h-1zM641 324h1v1h-1zM642 324h1v1h-1zM643 323h1v1h-1zM644 322h1v1h-1zM645 321h1v1h-1zM646 320h1v1h-1zM647 320h1v1h-1zM648 319h1v1h-1zM649 318h1v1h-1zM650 317h1v1h-1zM651 317h1v1h-1zM652 316h1v1h-1zM653 315h1v1h-1zM654 314h1v1h-1zM655 313h1v1h-1zM656 313h1v1h-1zM657 312h1v1h-1zM658 311h1v1h-1zM659 310h1v1h-1zM660 309h1v1h-1zM661 309h1v1h-1zM662 308h1v1h-1zM663 307h1v1h-1zM664 308h1v1h-1zM665 309h1v1h-1zM666 309h1v1h-1zM667 310h1v1h-1zM668 311h1v1h-1zM669 312h1v1h-1zM670 313h1v1h-1zM671 313h1v1h-1zM672 314h1v1h-1zM673 315h1v1h-1zM674 316h1v1h-1zM675 317h1v1h-1zM676 318h1v1h-1zM677 318h1v1h-1zM678 319h1v1h-1zM679 320h1v1h-1zM680 321h1v1h-1zM681 322h1v1h-1zM682 322h1v1h-1zM683 323h1v1h-1zM684 324h1v1h-1zM685 325h1v1h-1zM686 326h1v1h-1zM687 326h1v1h-1zM688 327h1v1h-1zM689 254h1v1h-1zM689 255h1v1h-1zM689 256h1v1h-1zM689 328h1v1h-1zM690 250h1v1h-1zM690 251h1v1h-1zM690 252h1v1h-1zM690 253h1v1h-1zM690 329h1v1h-1zM691 246h1v1h-1zM691 247h1v1h-1zM691 248h1v1h-1zM691 249h1v1h-1zM691 330h1v1h-1zM692 242h1v1h-1zM692 243h1v1h-1zM692 244h1v1h-1zM692 245h1v1h-1zM692 330h1v1h-1zM693 238h1v1h-1zM693 239h1v1h-1zM693 240h1v1h-1zM693 241h1v1h-1zM693 331h1v1h-1zM694 234h1v1h-1zM694 235h1v1h-1zM694 236h1v1h-1zM694 237h1v1h-1zM694 332h1v1h-1zM695 230h1v1h-1zM695 231h1v1h-1zM695 232h1v1h-1zM695 233h1v1h-1zM695 333h1v1h-1zM696 226h1v1h-1zM696 227h1v1h-1zM696 228h1v1h-1zM696 229h1v1h-1zM696 334h1v1h-1zM697 222h1v1h-1zM697 223h1v1h-1zM697 224h1v1h-1zM697 225h1v1h-1zM697 334h1v1h-1zM698 218h1v1h-1zM698 219h1v1h-1zM698 220h1v1h-1zM698 221h1v1h-1zM698 335h1v1h-1zM699 214h1v1h-1zM699 215h1v1h-1zM699 216h1v1h-1zM699 217h1v1h-1zM699 336h1v1h-1zM699 411h1v1h-1zM699 412h1v1h-1zM700 210h1v1h-1zM700 211h1v1h-1zM700 212h1v1h-1zM700 213h1v1h-1zM700 337h1v1h-1zM700 407h1v1h-1zM700 408h1v1h-1zM700 409h1v1h-1zM700 410h1v1h-1zM701 206h1v1h-1zM701 207h1v1h-1zM701 208h1v1h-1zM701 209h1v1h-1zM701 338h1v1h-1zM701 403h1v1h-1zM701 404h1v1h-1zM701 405h1v1h-1zM701 406h1v1h-1zM702 202h1v1h-1zM702 203h1v1h-1zM702 204h1v1h-1zM702 205h1v1h-1zM702 339h1v1h-1zM702 399h1v1h-1zM702 400h1v1h-1zM702 401h1v1h-1zM702 402h1v1h-1zM703 198h1v1h-1zM703 199h1v1h-1zM703 200h1v1h-1zM703 201h1v1h-1zM703 339h1v1h-1zM703 395h1v1h-1zM703 396h1v1h-1zM703 397h1v1h-1zM703 398h1v1h-1zM704 194h1v1h-1zM704 195h1v1h-1zM704 196h1v1h-1zM704 197h1v1h-1zM704 340h1v1h-1zM704 391h1v1h-1zM704 392h1v1h-1zM704 393h1v1h-1zM704 394h1v1h-1zM705 190h1v1h-1zM705 191h1v1h-1zM705 192h1v1h-1zM705 193h1v1h-1zM705 341h1v1h-1zM705 387h1v1h-1zM705 388h1v1h-1zM705 389h1v1h-1zM705 390h1v1h-1zM706 186h1v1h-1zM706 187h1v1h-1zM706 188h1v1h-1zM706 189h1v1h-1zM706 342h1v1h-1zM706 383h1v1h-1zM706 384h1v1h-1zM706 385h1v1h-1zM706 386h1v1h-1zM707 182h1v1h-1zM707 183h1v1h-1zM707 184h1v1h-1zM707 185h1v1h-1zM707 343h1v1h-1zM707 379h1v1h-1zM707 380h1v1h-1zM707 381h1v1h-1zM707 382h1v1h-1zM708 178h1v1h-1zM708 179h1v1h-1zM708 180h1v1h-1zM708 181h1v1h-1zM708 343h1v1h-1zM708 375h1v1h-1zM708 376h1v1h-1zM708 377h1v1h-1zM708 378h1v1h-1zM709 174h1v1h-1zM709 175h1v1h-1zM709 176h1v1h-1zM709 177h1v1h-1zM709 344h1v1h-1zM709 371h1v1h-1zM709 372h1v1h-1zM709 373h1v1h-1zM709 374h1v1h-1zM710 170h1v1h-1zM710 171h1v1h-1zM710 172h1v1h-1zM710 173h1v1h-1zM710 345h1v1h-1zM710 367h1v1h-1zM710 368h1v1h-1zM710 369h1v1h-1zM710 370h1v1h-1zM711 166h1v1h-1zM711 167h1v1h-1zM711 168h1v1h-1zM711 169h1v1h-1zM711 346h1v1h-1zM711 363h1v1h-1zM711 364h1v1h-1zM711 365h1v1h-1zM711 366h1v1h-1zM712 162h1v1h-1zM712 163h1v1h-1zM712 164h1v1h-1zM712 165h1v1h-1zM712 347h1v1h-1zM712 359h1v1h-1zM712 360h1v1h-1zM712 361h1v1h-1zM712 362h1v1h-1zM713 158h1v1h-1zM713 159h1v1h-1zM713 160h1v1h-1zM713 161h1v1h-1zM713 347h1v1h-1zM713 355h1v1h-1zM713 356h1v1h-1zM713 357h1v1h-1zM713 358h1v1h-1zM714 154h1v1h-1zM714 155h1v1h-1zM714 156h1v1h-1zM714 157h1v1h-1zM714 348h1v1h-1zM714 351h1v1h-1zM714 352h1v1h-1zM714 353h1v1h-1zM714 354h1v1h-1zM715 151h1v1h-1zM715 152h1v1h-1zM715 153h1v1h-1zM715 349h1v1h-1zM715 350h1v1h-1z" fill="#000"/>
<path d="M311 200h1v1h-1zM318 201h1v1h-1zM312 201h1v1h-1zM317 202h1v1h-1zM313 202h1v1h-1zM316 203h1v1h-1zM314 203h1v1h-1zM315 204h1v1h-1zM315 204h1v1h-1zM314 205h1v1h-1zM316 205h1v1h-1zM313 206h1v1h-1zM317 206h1v1h-1zM312 207h1v1h-1zM318 207h1v1h-1zM311 208h1v1h-1zM491 200h1v1h-1zM498 201h1v1h-1zM492 201h1v1h-1zM497 202h1v1h-1zM493 202h1v1h-1zM496 203h1v1h-1zM494 203h1v1h-1zM495 204h1v1h-1zM495 204h1v1h-1zM494 205h1v1h-1zM496 205h1v1h-1zM493 206h1v1h-1zM497 206h1v1h-1zM492 207h1v1h-1zM498 207h1v1h-1zM491 208h1v1h-1zM659 200h1v1h-1zM666 201h1v1h-1zM660 201h1v1h-1zM665 202h1v1h-1zM661 202h1v1h-1zM664 203h1v1h-1zM662 203h1v1h-1zM663 204h1v1h-1zM663 204h1v1h-1zM662 205h1v1h-1zM664 205h1v1h-1zM661 206h1v1h-1zM665 206h1v1h-1zM660 207h1v1h-1zM666 207h1v1h-1zM659 208h1v1h-1zM311 356h1v1h-1zM318 357h1v1h-1zM312 357h1v1h-1zM317 358h1v1h-1zM313 358h1v1h-1zM316 359h1v1h-1zM314 359h1v1h-1zM315 360h1v1h-1zM315 360h1v1h-1zM314 361h1v1h-1zM316 361h1v1h-1zM313 362h1v1h-1zM317 362h1v1h-1zM312 363h1v1h-1zM318 363h1v1h-1zM311 364h1v1h-1zM491 356h1v1h-1zM498 357h1v1h-1zM492 357h1v1h-1zM497 358h1v1h-1zM493 358h1v1h-1zM496 359h1v1h-1zM494 359h1v1h-1zM495 360h1v1h-1zM495 360h1v1h-1zM494 361h1v1h-1zM496 361h1v1h-1zM493 362h1v1h-1zM497 362h1v1h-1zM492 363h1v1h-1zM498 363h1v1h-1zM491 364h1v1h-1zM659 356h1v1h-1zM666 357h1v1h-1zM660 357h1v1h-1zM665 358h1v1h-1zM661 358h1v1h-1zM664 359h1v1h-1zM662 359h1v1h-1zM663 360h1v1h-1zM663 360h1v1h-1zM662 361h1v1h-1zM664 361h1v1h-1zM661 362h1v1h-1zM665 362h1v1h-1zM660 363h1v1h-1zM666 363h1v1h-1zM659 364h1v1h-1z" fill="#FF0000"/>
</svg>
</svg>
<div class="a check" style="left:182px;top:91px;width:16px;height:445px"></div>
<div class="a raised" style="left:182px;top:91px;width:16px;height:16px"></div>
<div class="a raised" style="left:182px;top:107px;width:16px;height:196px"></div>
<div class="a raised" style="left:182px;top:520px;width:16px;height:16px"></div>
<div class="a check" style="left:806px;top:69px;width:16px;height:494px"></div>
<div class="a raised" style="left:806px;top:69px;width:16px;height:16px"></div>
<div class="a raised" style="left:806px;top:85px;width:16px;height:269px"></div>
<div class="a raised" style="left:806px;top:547px;width:16px;height:16px"></div>
<div class="a check" style="left:482px;top:562px;width:324px;height:16px"></div>
<div class="a raised" style="left:482px;top:562px;width:16px;height:16px"></div>
<div class="a raised" style="left:498px;top:562px;width:292px;height:16px"></div>
<div class="a raised" style="left:790px;top:562px;width:16px;height:16px"></div>
<div class="a" style="left:806px;top:563px;width:16px;height:15px;background:#D4D0C8"></div>
<div class="a" style="left:476px;top:562px;width:6px;height:16px;background:#D4D0C8;border-left:1px solid #fff;border-right:1px solid #808080;box-shadow:inset 1px 0 0 #D4D0C8"></div>
<div class="a" style="left:477px;top:562px;width:5px;height:16px;border-left:1px solid #fff;border-right:1px solid #808080;border-bottom:1px solid #808080;background:#D4D0C8"></div>
<svg class="a" style="left:0;top:0" width="828" height="609" shape-rendering="crispEdges"><path d="M189 97h1v1h-1zM188 98h3v1h-3zM187 99h5v1h-5zM186 100h7v1h-7zM186 526h7v1h-7zM187 527h5v1h-5zM188 528h3v1h-3zM189 529h1v1h-1zM813 75h1v1h-1zM812 76h3v1h-3zM811 77h5v1h-5zM810 78h7v1h-7zM810 553h7v1h-7zM811 554h5v1h-5zM812 555h3v1h-3zM813 556h1v1h-1zM487 569h1v1h-1zM488 568h1v3h-1zM489 567h1v5h-1zM490 566h1v7h-1zM797 566h1v7h-1zM798 567h1v5h-1zM799 568h1v3h-1zM800 569h1v1h-1z" fill="#000"/></svg>
<svg class="a" style="left:204px;top:562px" width="272" height="16" viewBox="204 562 272 16" shape-rendering="crispEdges">
<rect x="205" y="563" width="271" height="15" fill="#D4D0C8"/>
<path d="M204 562h64v1h-64zM267 562h1v16h-1z" fill="#000"/>
<path d="M206 566h1v7h-1zM208 569h1v1h-1zM209 568h1v3h-1zM210 567h1v5h-1zM211 566h1v7h-1zM224 569h1v1h-1zM225 568h1v3h-1zM226 567h1v5h-1zM227 566h1v7h-1zM242 566h1v7h-1zM243 567h1v5h-1zM244 568h1v3h-1zM245 569h1v1h-1zM258 566h1v7h-1zM259 567h1v5h-1zM260 568h1v3h-1zM261 569h1v1h-1zM263 566h1v7h-1z" fill="#808080"/>
<path d="M268.5 562 L275.5 577.5 L314.5 577.5 L321.5 562 Z" fill="#fff" stroke="none" shape-rendering="auto"/>
<path d="M276 577h38v1h-38z" fill="#808080"/>
<path d="M269 562.5 L276 577.5 M314 577.5 L321 562.5" stroke="#000" stroke-width="1.2" fill="none" shape-rendering="auto"/>
<path d="M321 562h155v1h-155z" fill="#000"/>
<text x="278" y="575" font-family="Liberation Serif" font-weight="bold" font-size="14" letter-spacing="2.1" fill="#000" shape-rendering="auto">Test</text>
</svg>
<!-- status bar -->
<div class="st" style="left:4px;width:608px"></div>
<div class="stt" style="left:8px">Status</div>
<div class="st" style="left:614px;width:95px"></div>
<div class="stt" style="left:619px">2005-12-28</div>
<div class="st" style="left:711px;width:95px"></div>
<div class="stt" style="left:716px">22:16</div>
<svg class="a" style="left:809px;top:591px" width="14" height="13" viewBox="0 0 14 13" shape-rendering="crispEdges"><path d="M11 0h1v1h-1zM10 1h1v1h-1z" fill="none"/><g stroke-width="1" shape-rendering="auto"><path d="M13 1L1 13M13 5L5 13M13 9L9 13" stroke="#fff"/><path d="M13.5 2.5L2.5 13.5M13.5 3.5L3.5 13.5M13.5 6.5L6.5 13.5M13.5 7.5L7.5 13.5M13.5 10.5L10.5 13.5M13.5 11.5L11.5 13.5" stroke="#808080"/></g></svg>
</body></html>
